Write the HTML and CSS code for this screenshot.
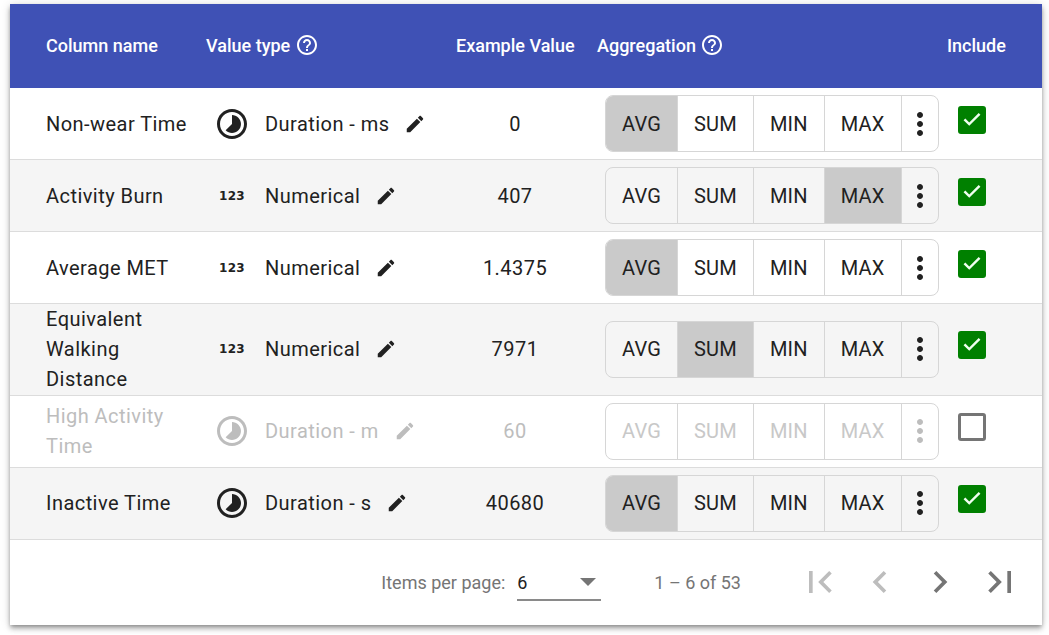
FILE: index.html

```html
<!DOCTYPE html>
<html lang="en">
<head>
<meta charset="utf-8">
<title>Columns</title>
<link rel="stylesheet" href="styles.css">
</head>
<body>
<svg class="defs" width="0" height="0">
  <symbol id="i-help" viewBox="0 0 24 24"><path d="M11 18h2v-2h-2v2zm1-16C6.48 2 2 6.48 2 12s4.48 10 10 10 10-4.48 10-10S17.52 2 12 2zm0 18c-4.41 0-8-3.59-8-8s3.59-8 8-8 8 3.59 8 8-3.59 8-8 8zm0-14c-2.21 0-4 1.79-4 4h2c0-1.1.9-2 2-2s2 .9 2 2c0 2-3 1.75-3 5h2c0-2.25 3-2.5 3-5 0-2.21-1.79-4-4-4z"/></symbol>
  <symbol id="i-time" viewBox="0 0 24 24"><path d="M16.24 7.76C15.07 6.59 13.54 6 12 6v6l-4.24 4.24c2.34 2.34 6.14 2.34 8.49 0 2.34-2.34 2.34-6.14-.01-8.48zM12 2C6.48 2 2 6.48 2 12s4.48 10 10 10 10-4.48 10-10S17.52 2 12 2zm0 18c-4.42 0-8-3.58-8-8s3.58-8 8-8 8 3.58 8 8-3.58 8-8 8z"/></symbol>
  <symbol id="i-edit" viewBox="0 0 24 24"><path d="M3 17.25V21h3.75L17.81 9.94l-3.75-3.75L3 17.25zM20.71 7.04c.39-.39.39-1.02 0-1.41l-2.34-2.34c-.39-.39-1.02-.39-1.41 0l-1.83 1.83 3.75 3.75 1.83-1.83z"/></symbol>
  <symbol id="i-more" viewBox="0 0 24 24"><path d="M12 8c1.1 0 2-.9 2-2s-.9-2-2-2-2 .9-2 2 .9 2 2 2zm0 2c-1.1 0-2 .9-2 2s.9 2 2 2 2-.9 2-2-.9-2-2-2zm0 6c-1.1 0-2 .9-2 2s.9 2 2 2 2-.9 2-2-.9-2-2-2z"/></symbol>
  <symbol id="i-check" viewBox="0 0 24 24"><path d="M9 18.4l-6.2-6.2 1.9-1.9L9 14.6 19.3 4.3l1.9 1.9z"/></symbol>
  <symbol id="i-first" viewBox="0 0 24 24"><path d="M18.41 16.59L13.82 12l4.59-4.59L17 6l-6 6 6 6zM6 6h2v12H6z"/></symbol>
  <symbol id="i-prev" viewBox="0 0 24 24"><path d="M15.41 7.41L14 6l-6 6 6 6 1.41-1.41L10.83 12z"/></symbol>
  <symbol id="i-next" viewBox="0 0 24 24"><path d="M10 6L8.59 7.41 13.17 12l-4.58 4.59L10 18l6-6z"/></symbol>
  <symbol id="i-last" viewBox="0 0 24 24"><path d="M5.59 7.41L10.18 12l-4.59 4.59L7 18l6-6-6-6zM16 6h2v12h-2z"/></symbol>
</svg>

<div class="card">
  <table class="cols">
    <colgroup>
      <col class="c-name"><col class="c-type"><col class="c-example"><col class="c-agg"><col class="c-inc">
    </colgroup>
    <thead>
      <tr>
        <th class="th-name">Column name</th>
        <th class="th-type"><span class="th-help">Value type <svg class="help"><use href="#i-help"/></svg></span></th>
        <th class="th-example">Example Value</th>
        <th class="th-agg"><span class="th-help">Aggregation <svg class="help"><use href="#i-help"/></svg></span></th>
        <th class="th-inc">Include</th>
      </tr>
    </thead>
    <tbody>
      <tr>
        <td class="name">Non-wear Time</td>
        <td><div class="vtype"><span class="vicon"><svg class="time"><use href="#i-time"/></svg></span><span>Duration - ms</span><svg class="edit"><use href="#i-edit"/></svg></div></td>
        <td class="example">0</td>
        <td class="agg"><div class="toggle"><span class="on">AVG</span><span>SUM</span><span>MIN</span><span>MAX</span><span class="more"><svg><use href="#i-more"/></svg></span></div></td>
        <td class="inc"><span class="box checked"><svg><use href="#i-check"/></svg></span></td>
      </tr>
      <tr>
        <td class="name">Activity Burn</td>
        <td><div class="vtype"><span class="vicon num">123</span><span>Numerical</span><svg class="edit"><use href="#i-edit"/></svg></div></td>
        <td class="example">407</td>
        <td class="agg"><div class="toggle"><span>AVG</span><span>SUM</span><span>MIN</span><span class="on">MAX</span><span class="more"><svg><use href="#i-more"/></svg></span></div></td>
        <td class="inc"><span class="box checked"><svg><use href="#i-check"/></svg></span></td>
      </tr>
      <tr>
        <td class="name">Average MET</td>
        <td><div class="vtype"><span class="vicon num">123</span><span>Numerical</span><svg class="edit"><use href="#i-edit"/></svg></div></td>
        <td class="example">1.4375</td>
        <td class="agg"><div class="toggle"><span class="on">AVG</span><span>SUM</span><span>MIN</span><span>MAX</span><span class="more"><svg><use href="#i-more"/></svg></span></div></td>
        <td class="inc"><span class="box checked"><svg><use href="#i-check"/></svg></span></td>
      </tr>
      <tr class="tall up">
        <td class="name">Equivalent Walking Distance</td>
        <td><div class="vtype"><span class="vicon num">123</span><span>Numerical</span><svg class="edit"><use href="#i-edit"/></svg></div></td>
        <td class="example">7971</td>
        <td class="agg"><div class="toggle"><span>AVG</span><span class="on">SUM</span><span>MIN</span><span>MAX</span><span class="more"><svg><use href="#i-more"/></svg></span></div></td>
        <td class="inc"><span class="box checked"><svg><use href="#i-check"/></svg></span></td>
      </tr>
      <tr class="off up">
        <td class="name">High Activity Time</td>
        <td><div class="vtype"><span class="vicon"><svg class="time"><use href="#i-time"/></svg></span><span>Duration - m</span><svg class="edit"><use href="#i-edit"/></svg></div></td>
        <td class="example">60</td>
        <td class="agg"><div class="toggle"><span>AVG</span><span>SUM</span><span>MIN</span><span>MAX</span><span class="more"><svg><use href="#i-more"/></svg></span></div></td>
        <td class="inc"><span class="box"></span></td>
      </tr>
      <tr class="up">
        <td class="name">Inactive Time</td>
        <td><div class="vtype"><span class="vicon"><svg class="time"><use href="#i-time"/></svg></span><span>Duration - s</span><svg class="edit"><use href="#i-edit"/></svg></div></td>
        <td class="example">40680</td>
        <td class="agg"><div class="toggle"><span class="on">AVG</span><span>SUM</span><span>MIN</span><span>MAX</span><span class="more"><svg><use href="#i-more"/></svg></span></div></td>
        <td class="inc"><span class="box checked"><svg><use href="#i-check"/></svg></span></td>
      </tr>
    </tbody>
  </table>

  <div class="pager">
    <span class="per-label">Items per page:</span>
    <div class="per-select"><span>6</span><i class="caret"></i></div>
    <span class="range">1 – 6 of 53</span>
    <div class="pager-btns">
      <span class="pbtn dim"><svg><use href="#i-first"/></svg></span>
      <span class="pbtn dim"><svg><use href="#i-prev"/></svg></span>
      <span class="pbtn"><svg><use href="#i-next"/></svg></span>
      <span class="pbtn"><svg><use href="#i-last"/></svg></span>
    </div>
  </div>
</div>
</body>
</html>
```

FILE: styles.css

```css
html, body {
  margin: 0;
  padding: 0;
  background: #fff;
}
body {
  height: 631px;
  padding: 4px 7px 0 10px;
  font-family: Roboto, "Liberation Sans", sans-serif;
  color: #212121;
}
.defs { position: absolute; }

.card {
  width: 1032px;
  height: 621px;
  background: #fff;
  box-shadow: 0 2px 4px -1px rgba(0,0,0,.3), 0 4px 5px 0 rgba(0,0,0,.2), 0 1px 10px 0 rgba(0,0,0,.14);
}

/* ---- table ---- */
.cols {
  width: 1032px;
  table-layout: fixed;
  border-collapse: separate;
  border-spacing: 0;
}
.c-name { width: 188px; }
.c-type { width: 250px; }
.c-example { width: 134px; }
.c-agg { width: 365px; }
.c-inc { width: 95px; }

thead tr { height: 84px; background: #3f51b5; }
th {
  padding: 0 0 2px 8px;
  text-align: left;
  color: #fff;
  font-size: 18px;
  font-weight: 500;
}
.th-name { padding-left: 36px; }
.th-example { padding-left: 8px; white-space: nowrap; }
.th-agg { padding-left: 15px; }
.th-inc { padding-left: 0; }
.th-help { display: flex; align-items: center; white-space: pre; }
.help { width: 24px; height: 24px; fill: #fff; }

tbody tr { height: 72px; }
tbody tr.tall { height: 92px; }
tbody tr:nth-child(even) { background: #f5f5f5; }
td {
  padding: 0;
  font-size: 20px;
  line-height: 30px;
  letter-spacing: .45px;
  border-bottom: 1px solid #dcdcdc;
}
.up td { padding-bottom: 1px; }
.name, .up .name { padding-left: 36px; padding-right: 8px; }
.vtype { display: flex; align-items: center; padding-left: 16px; white-space: nowrap; }
.vicon { display: flex; justify-content: center; width: 36px; margin-right: 15px; }
.time { width: 36px; height: 36px; fill: #212121; display: block; }
.num {
  font-family: "DejaVu Sans", sans-serif;
  font-weight: 700;
  font-size: 12px;
  line-height: 12px;
  letter-spacing: .3px;
}
.edit { width: 22px; height: 22px; margin-left: 15px; fill: #212121; }
.example { text-align: center; }
.agg, .up .agg { padding-left: 23px; }

.toggle {
  display: inline-flex;
  height: 55px;
  background: #fff;
  border: 1px solid #d6d6d6;
  border-radius: 8px;
  letter-spacing: .2px;
  overflow: hidden;
  vertical-align: middle;
}
tbody tr:nth-child(even) .toggle { background: #f5f5f5; }
.toggle span {
  display: flex;
  align-items: center;
  padding: 0 16px;
  border-left: 1px solid #d6d6d6;
}
.toggle span:first-child { border-left: 0; }
.toggle .on { background: #cacaca; }
.toggle .more { padding: 0; width: 36px; justify-content: center; }
.more svg { width: 36px; height: 36px; fill: #212121; display: block; }

.inc, .up .inc { padding-left: 11px; }
.box {
  display: block;
  width: 22px;
  height: 22px;
  margin-top: -8px;
  border: 3px solid #757575;
  border-radius: 3px;
}
.box.checked { background: #008000; border-color: #008000; }
.box svg { display: block; width: 22px; height: 22px; fill: #f0fff0; }

.off td { color: #bdbdbd; }
.off .time, .off .edit, .off .more svg { fill: #bdbdbd; }
.off .toggle { color: #c8c8c8; }

/* ---- paginator ---- */
.pager {
  display: flex;
  align-items: center;
  box-sizing: border-box;
  height: 85px;
  padding: 0 12px 1px 0;
  justify-content: flex-end;
  font-size: 18px;
  color: #757575;
}
.per-label { margin-right: 12px; }
.per-select {
  display: flex;
  align-items: center;
  justify-content: space-between;
  box-sizing: border-box;
  width: 84px;
  height: 35px;
  margin-top: 2px;
  padding-right: 5px;
  border-bottom: 2px solid #8a8a8a;
  color: #212121;
}
.caret {
  width: 0;
  height: 0;
  border-left: 8px solid transparent;
  border-right: 8px solid transparent;
  border-top: 8px solid #757575;
}
.range { margin-left: 53px; margin-right: 49px; }
.pager-btns { display: flex; }
.pbtn { display: flex; justify-content: center; width: 60px; }
.pbtn svg { width: 44px; height: 44px; fill: #757575; display: block; }
.pbtn.dim svg { fill: #bdbdbd; }
```
